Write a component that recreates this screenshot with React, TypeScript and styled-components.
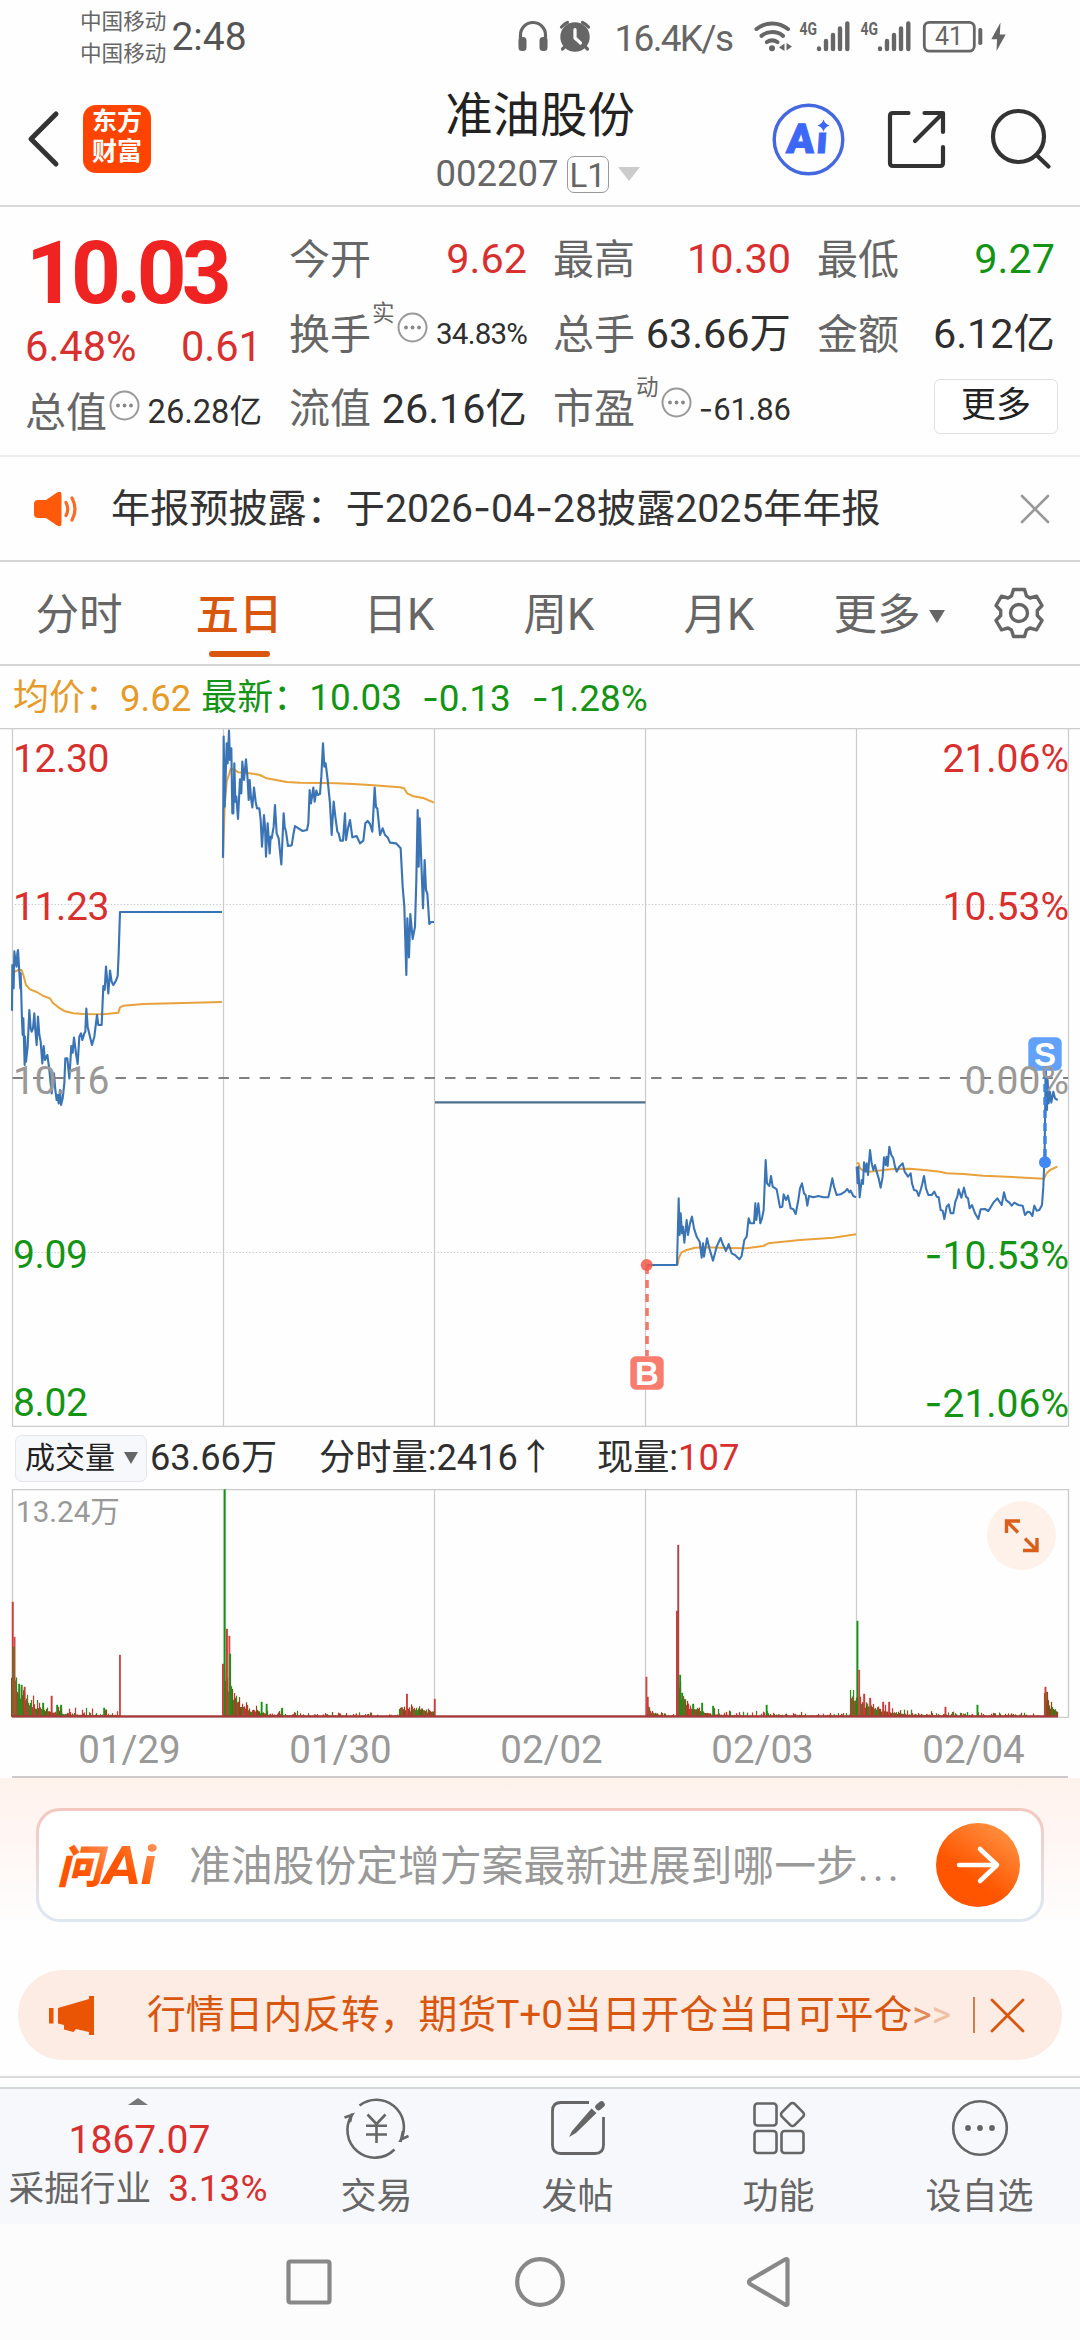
import React from "react";
import styled, { createGlobalStyle } from "styled-components";

const RED = "#d8302f";
const GREEN = "#149414";
const GREY = "#666666";
const INK = "#2f2f2f";
const ORANGE = "#d9560f";
const LINE = "#cccccc";

const GlobalStyle = createGlobalStyle`
  * { box-sizing: border-box; }
  body { margin: 0; background: #fefefe; }
  svg { display: block; flex: none; }
`;

const Page = styled.div`
  width: 1080px;
  height: 2340px;
  overflow: hidden;
  display: flex;
  flex-direction: column;
  background: #fefefe;
  color: ${INK};
  font-family: Roboto, "Noto Sans CJK SC", sans-serif;
  white-space: nowrap;
`;

interface LabelProps {
  $size: number;
  $color?: string;
  $weight?: number;
  $ls?: number;
  $ml?: number;
}
const Label = styled.span<LabelProps>`
  font-size: ${(p) => p.$size}px;
  line-height: 1.2;
  color: ${(p) => p.$color ?? INK};
  font-weight: ${(p) => p.$weight ?? 400};
  letter-spacing: ${(p) => p.$ls ?? 0}px;
  margin-left: ${(p) => p.$ml ?? 0}px;
`;
const Dash = styled.span`
  font-family: Inter, sans-serif;
`;

/* Figures use a wider hyphen than the digit face provides. */
const dashed = (s: string) =>
  s.split("-").map((part, i) => (
    <React.Fragment key={i}>
      {i > 0 && <Dash>-</Dash>}
      {part}
    </React.Fragment>
  ));

/* ---------- status bar ---------- */
const StatusBar = styled.div`
  height: 75px;
  flex: none;
  display: flex;
  justify-content: space-between;
  padding: 0 72px 0 80px;
`;
const StatusSide = styled.div`
  display: flex;
  align-items: center;
`;
const Carriers = styled.div`
  display: flex;
  flex-direction: column;
  font-size: 21.6px;
  line-height: 32px;
  color: ${GREY};
  padding-top: 1px;
`;
const StatusIcons = styled.svg`
  width: 492px;
  height: 75px;
`;

/* ---------- header ---------- */
const Header = styled.header`
  height: 132px;
  flex: none;
  display: grid;
  grid-template-columns: 322px 1fr 322px;
  border-bottom: 2px solid #d9d9d9;
`;
const HeaderLeft = styled.div`
  display: flex;
  align-items: center;
  padding: 0 0 3px 26px;
  gap: 23px;
`;
const AppLogo = styled.div`
  width: 68px;
  height: 68px;
  border-radius: 13px;
  background: #ff4400;
  color: #fff;
  font-size: 25px;
  line-height: 30px;
  font-weight: 700;
  text-align: center;
  padding-top: 2px;
  white-space: normal;
`;
const HeaderTitle = styled.div`
  display: flex;
  flex-direction: column;
  align-items: center;
`;
const StockName = styled.h1`
  margin: 13px 0 0;
  font-size: 47.4px;
  line-height: 56px;
  font-weight: 400;
  color: #222;
`;
const CodeLine = styled.div`
  display: flex;
  align-items: center;
  height: 40px;
  margin-top: 10px;
  padding-right: 5px;
`;
const LevelBadge = styled.span`
  width: 42px;
  height: 37px;
  margin: 0 9px 0 8px;
  border: 1.5px solid #999;
  border-radius: 7px;
  color: ${GREY};
  font-size: 33px;
  line-height: 37px;
  text-align: center;
`;
const Triangle = styled.i<{ $w: number; $h: number; $color: string; $up?: boolean }>`
  border: ${(p) => p.$w / 2}px solid transparent;
  border-top: ${(p) => (p.$up ? "0" : `${p.$h}px solid ${p.$color}`)};
  border-bottom: ${(p) => (p.$up ? `${p.$h}px solid ${p.$color}` : "0")};
`;

/* ---------- quote panel ---------- */
const QuotePanel = styled.section`
  height: 250px;
  flex: none;
  padding: 16px 24px 0 25px;
  display: grid;
  grid-template-columns: 237px 1fr;
  column-gap: 27px;
  border-bottom: 2px solid #ececec;
`;
const PriceColumn = styled.div`
  display: grid;
  grid-template-rows: 93px 61px 71px;
`;
const BigPrice = styled.div`
  font-size: 87px;
  line-height: 100px;
  font-weight: 700;
  letter-spacing: -4.8px;
  color: #f02323;
  padding-left: 1px;
`;
const Cell = styled.div`
  display: flex;
  align-items: center;
  justify-content: space-between;
`;
const StatGrid = styled.div`
  display: grid;
  grid-template-columns: repeat(3, 238px);
  grid-template-rows: repeat(3, 74.6px);
  column-gap: 26px;
`;
const Caption = styled.span`
  font-size: 41px;
  line-height: 48px;
  color: ${GREY};
  display: flex;
  align-items: center;
`;
const Sup = styled.sup`
  font-size: 22.5px;
  line-height: 22px;
  align-self: flex-start;
  margin: -9px 0 0 1px;
`;
const DotsRing = styled.svg`
  width: 31px;
  height: 31px;
  margin: -14px 0 0 2px;
`;
const MoreButton = styled.button`
  width: 124px;
  height: 55px;
  margin: -6px -3px 0 auto;
  padding: 0;
  border: 1.5px solid #e0e0e0;
  border-radius: 6px;
  background: #fff;
  color: #222;
  font: 400 35px/48px Roboto, "Noto Sans CJK SC", sans-serif;
`;

/* ---------- notice ---------- */
const Notice = styled.div`
  height: 105px;
  flex: none;
  display: flex;
  align-items: center;
  padding: 0 30px 0 33px;
  border-bottom: 2px solid #d6d6d6;
`;
const Spacer = styled.div`
  flex: 1;
`;

/* ---------- tabs ---------- */
const Tabs = styled.nav`
  height: 104px;
  flex: none;
  margin-left: -1px;
  display: grid;
  grid-template-columns: repeat(5, 160px) 180px 1fr;
  border-bottom: 2px solid #d6d6d6;
`;
const Tab = styled.div<{ $active?: boolean }>`
  display: flex;
  flex-direction: column;
  align-items: center;
  padding-top: 24px;
  font-size: 43.6px;
  line-height: 60px;
  color: ${(p) => (p.$active ? ORANGE : GREY)};
  font-weight: ${(p) => (p.$active ? 500 : 400)};
`;
const TabInline = styled.span`
  display: flex;
  align-items: center;
  gap: 8px;
`;
const Underline = styled.i`
  width: 61px;
  height: 6px;
  margin-top: 5px;
  border-radius: 3px;
  background: ${ORANGE};
`;
const GearBox = styled.div`
  padding: 24px 0 0 13px;
`;

/* ---------- chart ---------- */
const Legend = styled.div`
  height: 62px;
  flex: none;
  display: flex;
  align-items: center;
  padding: 3px 0 0 13px;
`;
const ChartBox = styled.div`
  height: 699px;
  flex: none;
  position: relative;
`;
const AxisLabel = styled.span<{ $top: number; $right?: boolean; $color: string }>`
  position: absolute;
  top: ${(p) => p.$top + 1}px;
  ${(p) => (p.$right ? "right: 11px;" : "left: 13px; letter-spacing: -0.4px;")}
  font-size: 39px;
  line-height: 46px;
  color: ${(p) => p.$color};
`;
const VolumeBar = styled.div`
  height: 62px;
  flex: none;
  display: flex;
  align-items: center;
  padding: 0 0 0 15px;
`;
const Picker = styled.div`
  width: 132px;
  height: 47px;
  display: flex;
  align-items: center;
  justify-content: space-between;
  padding: 0 8px 0 9px;
  border: 1.5px solid #e4e6ea;
  border-radius: 7px;
  background: #f7f8fb;
`;
const VolumeBox = styled.div`
  height: 229px;
  flex: none;
  position: relative;
`;
const VolumeMax = styled.span`
  position: absolute;
  left: 16px;
  top: 5px;
  font-size: 29.6px;
  line-height: 36px;
  color: #999;
`;
const Expand = styled.div`
  position: absolute;
  left: 987px;
  top: 12px;
  width: 69px;
  height: 69px;
  border-radius: 50%;
  background: #fef1ea;
`;
const Dates = styled.div`
  height: 60px;
  flex: none;
  margin: 0 12px;
  border-bottom: 2px solid #cfcaca;
  display: grid;
  grid-template-columns: repeat(5, 211px);
  padding-left: 12px;
  text-align: center;
  font-size: 38.5px;
  line-height: 63px;
  color: #999;
`;

/* ---------- assistant & promo ---------- */
const AskSection = styled.section`
  height: 192px;
  flex: none;
  padding: 30px 36px 0;
  background: linear-gradient(#fff2ed 0, #fff6f3 60px, #fefefe 150px);
`;
const AskCard = styled.div`
  height: 114px;
  border: 3px solid transparent;
  border-radius: 24px;
  background: linear-gradient(#fff, #fff) padding-box,
    linear-gradient(#f3c8c0, #efd0cc 30%, #dfe6f1 85%) border-box;
  display: flex;
  align-items: center;
  padding: 0 21px 0 8px;
`;
const AskText = styled.span`
  margin-left: 26px;
  padding-top: 4px;
  font-size: 41.8px;
  line-height: 50px;
  color: #999;
`;
const Ellipsis = styled.span`
  letter-spacing: 4px;
`;
const GoButton = styled.div`
  width: 84px;
  height: 84px;
  border-radius: 50%;
  background: linear-gradient(215deg, #ff9444 8%, #ff5500 62%);
`;
const Promo = styled.section`
  height: 90px;
  flex: none;
  margin: 0 18px;
  padding: 0 37px 0 29px;
  border-radius: 45px;
  background: #fcece3;
  display: flex;
  align-items: center;
`;
const PromoDivider = styled.i`
  flex: none;
  width: 2px;
  height: 36px;
  margin-right: 15px;
  background: #cc7d55;
`;
const Seam = styled.div`
  height: 29px;
  flex: none;
  padding-top: 16px;
  border-bottom: 2px solid #d3d8da;
  &::before {
    content: "";
    display: block;
    height: 2px;
    background: #dadada;
  }
`;

/* ---------- bottom bars ---------- */
const BottomBar = styled.footer`
  height: 135px;
  flex: none;
  display: grid;
  grid-template-columns: 276px repeat(4, 201px);
  background: #f7f8fb;
`;
const IndexBox = styled.div`
  display: flex;
  flex-direction: column;
  align-items: center;
  padding-top: 9px;
`;
const IndexValue = styled.span`
  margin: 12px 0 0 3px;
  font-size: 39px;
  line-height: 47px;
  color: ${RED};
`;
const IndexRow = styled.div`
  display: flex;
  align-items: center;
  margin-top: 3px;
  gap: 17px;
`;
const Action = styled.div`
  display: flex;
  flex-direction: column;
  align-items: center;
  padding-top: 5px;
  font-size: 36px;
  line-height: 50px;
  color: ${GREY};
  & > span {
    margin-top: 12px;
  }
`;
const SystemNav = styled.div`
  flex: 1;
  background: #fcfcfc;
`;

/* ---------- series data: [x, y] pairs on a 3x grid ---------- */
const PRICE_A = [
  "36,872 37,735 41,805 43,694 47,730 50,740 52,700 54,690 57,740 61,805 62,760 66,900 68,945 70,895 74,1035 75,950 78,1025 83,980 88,870 92,925 95,935 99,925 103,880 106,930 110,975 114,890 118,945 122,965 127,1030 131,978 135,1020 142,1005 147,1040 155,1120 162,1060 166,1110 170,1140 173,1125 176,1150 180,1110 183,1155 188,1135 193,1090 196,1015 202,1015 208,1075 214,978 218,998 222,953 228,1000 233,1032 238,950 243,940 247,960 253,940 256,935 259,866 263,920 270,950 276,975 283,950 291,885 295,915 305,915 310,798 314,810 318,740 325,820 330,752 335,785 340,795 348,782 353,768 356,700 360,576 666,576",
  "669,413 671,50 674,260 680,70 683,130 687,32 690,120 694,85 697,280 700,280 703,130 706,245 709,230 714,297 720,178 724,220 727,125 732,180 738,118 743,180 746,240 749,180 753,235 757,262 762,203 767,245 771,265 778,265 782,300 786,380 792,285 795,320 798,410 803,310 809,400 812,350 815,355 821,320 825,255 830,340 836,355 844,433 851,280 854,320 858,335 864,378 875,376 880,345 885,318 895,325 908,333 921,330 925,310 929,210 933,250 940,203 944,245 949,212 953,225 960,222 964,170 969,70 973,140 977,130 983,180 990,250 995,345 1001,245 1006,290 1012,335 1016,340 1021,362 1029,362 1035,280 1038,360 1044,325 1050,300 1057,352 1070,348 1080,370 1090,362 1096,310 1103,303 1110,312 1117,335 1124,203 1128,262 1132,265 1140,345 1148,325 1155,345 1163,352 1170,368 1188,370 1202,385 1208,500 1213,560 1219,765 1222,595 1227,712 1231,582 1238,657 1245,620 1249,480 1253,270 1256,440 1259,295 1263,400 1269,565 1274,420 1278,510 1282,520 1288,612 1293,606 1302,606",
];
const MEAN_A = [
  "36,765 45,755 55,750 65,750 70,765 78,795 90,808 110,816 130,828 150,835 158,848 175,862 195,874 220,880 250,882 310,883 355,878 360,862 370,857 430,852 550,849 666,846",
  "669,413 674,260 680,185 688,160 692,146 702,148 715,157 735,158 765,162 780,165 800,175 840,182 860,186 900,188 960,189 1010,190 1060,192 1120,196 1180,200 1200,202 1212,205 1222,220 1240,229 1270,234 1302,248",
];
const PRICE_B = [
  "140,735 231,735 236,535 239,645 242,580 246,640 249,620 253,668 260,600 264,645 270,610 276,590 282,625 290,650 299,665 305,713 309,670 312,710 321,655 328,685 339,722 350,680 362,654 368,672 378,693 386,672 395,700 405,705 418,718 425,708 433,660 440,650 446,595 451,610 462,610 466,550 469,600 475,550 481,610 486,595 491,570 497,420 501,490 508,498 513,468 518,500 530,508 540,562 547,560 551,523 558,540 564,527 572,565 580,568 587,582 595,540 600,505 606,490 612,520 617,525 622,557 627,528 640,532 655,528 670,532 685,532 690,510 697,475 702,500 710,525 722,523 735,515 742,507 748,517 752,512 760,528 768,532",
  "770,440 773,490 775,440 779,532 785,480 789,492 792,427 797,455 800,430 804,465 810,390 815,430 820,450 825,435 830,455 836,475 842,503 848,470 852,412 857,435 860,410 863,438 868,380 874,405 880,415 885,440 890,455 898,440 908,430 914,455 924,470 932,460 936,490 942,510 950,512 956,528 962,510 966,495 972,468 978,505 985,525 995,525 1003,515 1010,530 1016,532 1022,570 1028,572 1033,597 1040,560 1046,553 1052,580 1060,580 1066,545 1072,530 1076,508 1084,533 1092,503 1098,530 1104,535 1109,565 1116,555 1125,580 1135,597 1142,568 1155,567 1165,573 1172,562 1180,548 1192,535 1205,555 1212,517 1218,540 1228,548 1235,557 1243,548 1255,555 1268,557 1275,585 1283,575 1290,577 1297,588 1303,557 1310,572 1318,570 1326,555 1330,500 1334,400 1337,125 1341,270 1343,180 1346,250 1350,215 1354,248 1360,215 1365,235 1373,240",
];
const MEAN_B = [
  "233,735 236,715 244,697 260,690 285,683 320,682 380,684 440,685 490,678 505,670 600,660 700,653 768,643",
  "770,430 776,430 780,445 790,452 810,455 850,450 880,447 930,446 980,451 1020,455 1040,460 1090,462 1150,467 1220,470 1290,474 1332,476 1340,460 1350,450 1372,440",
];

const COLUMNS = [12.5, 223.5, 434.5, 645.5, 856.5, 1068.5];

const Series = ({ points, color, width }: { points: string[]; color: string; width: number }) => (
  <>
    {points.map((p) => (
      <polyline key={p.slice(0, 9)} points={p} fill="none" stroke={color} strokeWidth={width} strokeLinejoin="round" />
    ))}
  </>
);

const PriceChart = () => (
  <svg width="1080" height="699" viewBox="0 728 1080 699">
    <path d="M0 728.5H1080M12.5 1426.5H1068.5" stroke={LINE} strokeWidth="1.4" />
    {COLUMNS.map((x) => (
      <path key={x} d={`M${x} 729V1426.5`} stroke={LINE} strokeWidth="1.2" />
    ))}
    <path d="M15 904.5H1068M15 1252.5H1068" stroke="#c8c8c8" strokeWidth="1.2" strokeDasharray="1.3 2" />
    <g transform="translate(0 720) scale(0.33333)">
      <Series points={MEAN_A} color="#e8a23c" width={6} />
      <Series points={PRICE_A} color="#3a74b5" width={6.4} />
    </g>
    <path d="M435 1102.4H645.5" stroke="#4f6f90" strokeWidth="2.4" />
    <g transform="translate(600 1020) scale(0.33333)">
      <Series points={MEAN_B} color="#e8a23c" width={6} />
      <Series points={PRICE_B} color="#3a74b5" width={6.2} />
    </g>
    <path d="M12.5 1078H1068" stroke="#808080" strokeWidth="2" strokeDasharray="10.4 10.2" />
    <path d="M647 1265V1356" stroke="#f4796a" strokeWidth="3.6" strokeDasharray="8 6" strokeDashoffset="-1" />
    <circle cx="646.7" cy="1265" r="6" fill="#f4584a" fillOpacity="0.85" />
    <rect x="630.3" y="1356.3" width="33.4" height="33.4" rx="5.5" fill="#f87d6e" />
    <text x="647" y="1385" fontSize="33" fontWeight="700" fill="#fff" textAnchor="middle" fontFamily="Liberation Sans, sans-serif">B</text>
    <rect x="1028.3" y="1037.3" width="33.4" height="33.4" rx="5.5" fill="#62a1fa" />
    <text x="1045" y="1066" fontSize="33" fontWeight="700" fill="#fff" textAnchor="middle" fontFamily="Liberation Sans, sans-serif">S</text>
    <path d="M1045 1071V1160" stroke="#3c80e6" strokeWidth="3.4" strokeDasharray="8 5" />
    <circle cx="1045" cy="1162.3" r="6" fill="#4088f5" />
  </svg>
);

/* Volume decays from each opening burst; fixed spikes are listed apart. */
const BURSTS: [number, number, number, number, number][] = [
  // from, to, start height, decay length, floor
  [12, 120, 44, 15, 5],
  [224, 434, 46, 14, 3],
  [399, 434, 10, 60, 2],
  [646, 676, 14, 6, 1.5],
  [678, 856, 34, 11, 3.5],
  [850, 1040, 26, 22, 3],
  [1044, 1058, 26, 8, 2],
];
const SPIKES: [number, number, string][] = [
  [11.8, 39, "#8a4a1c"], [12.6, 115, "#cf3a3a"], [14.4, 80, "#d04848"], [13.6, 70, "#5c7a1c"],
  [19, 33, "#2e8a1c"], [21.5, 32, "#2e8a1c"], [24.5, 30, "#c93636"], [43, 14, "#149414"],
  [51.5, 21, "#c93636"], [57, 12, "#149414"], [61, 12, "#149414"], [104, 9, "#149414"],
  [119.8, 62, "#cf4a4a"], [222.8, 53, "#cf3a3a"], [226.8, 88, "#cf3a3a"],
  [224.6, 227.5, "#149414"], [229.2, 81, "#d04848"], [230, 63, "#149414"], [261.5, 15, "#149414"],
  [266.5, 13, "#149414"], [282, 9, "#149414"], [406.8, 23, "#cf3a3a"], [434.6, 18, "#cf3a3a"],
  [646.3, 40, "#cf4a4a"], [647.6, 20, "#cf3a3a"], [676.8, 106, "#cf3a3a"], [678.1, 172, "#a84444"],
  [680, 42, "#149414"], [682, 24, "#149414"], [693, 13, "#149414"], [702, 14, "#149414"],
  [713, 11, "#149414"], [766.5, 12, "#149414"], [857.3, 96, "#149414"], [859, 47, "#cf4a4a"],
  [864, 23, "#cf3a3a"], [870, 19, "#cf3a3a"], [883, 15, "#cf3a3a"], [889, 15, "#cf3a3a"],
  [945.3, 10, "#cf3a3a"], [977.3, 12, "#149414"], [1045.3, 30, "#cf3a3a"], [1047, 25, "#8a4a1c"],
];
const noise = (n: number) => {
  const v = Math.sin(n * 12.9898) * 43758.5453;
  return v - Math.floor(v);
};
const VolumeChart = () => (
  <svg width="1080" height="229" viewBox="0 1489 1080 229">
    <path d="M12.5 1489.6H1068.5V1717.4H12.5Z" fill="none" stroke={LINE} strokeWidth="1.4" />
    {COLUMNS.slice(1, 5).map((x) => (
      <path key={x} d={`M${x} 1489V1717`} stroke={LINE} strokeWidth="1.2" />
    ))}
    {BURSTS.flatMap(([from, to, h, decay, floor]) =>
      Array.from({ length: Math.floor(to - from) }, (_, i) => {
        const x = from + i + 0.5;
        const a = noise(x);
        const height = (h * Math.exp(-i / decay)) * (0.55 + a * 0.5) + floor * (0.3 + Math.pow(noise(x + 7), 4) * 1.9 * (0.5 + Math.exp(-i / 70)));
        const tone = noise(x + 3);
        const color = tone < 0.4 ? "#c93434" : tone < 0.72 ? "#7c521a" : "#2e8a1c";
        return <rect key={`${from}-${i}`} x={x - 0.6} y={1716.8 - height} width="1.25" height={height} fill={color} />;
      })
    )}
    {SPIKES.map(([x, h, c]) => (
      <rect key={x} x={x - 0.8} y={1716.8 - h} width="1.9" height={h} fill={c} />
    ))}
    <path d="M12 1716.4H1058" stroke="#a83a3a" strokeWidth="2.2" />
  </svg>
);

const Ring = () => (
  <DotsRing viewBox="0 0 31 31">
    <circle cx="15.5" cy="15.5" r="14" fill="none" stroke="#999" strokeWidth="2" />
    <g fill="#888">
      <circle cx="9" cy="15.5" r="1.9" />
      <circle cx="15.5" cy="15.5" r="1.9" />
      <circle cx="22" cy="15.5" r="1.9" />
    </g>
  </DotsRing>
);

const SignalBars = ({ x }: { x: number }) => (
  <path
    d={`M${x} 49V48.5M${x + 7} 49V41M${x + 14} 49V35M${x + 21} 49V28.5M${x + 28.3} 49V23.5`}
    stroke={GREY}
    strokeWidth="4.4"
    strokeLinecap="round"
  />
);

const StatusGlyphs = () => (
  <StatusIcons viewBox="516 0 492 75" fill="none">
    <path d="M520.5 46V35a12.5 12.5 0 0 1 25 0V46" stroke={GREY} strokeWidth="3.2" />
    <rect x="518.5" y="37" width="8" height="14" rx="3.5" fill={GREY} />
    <rect x="539.5" y="37" width="8" height="14" rx="3.5" fill={GREY} />
    <circle cx="575" cy="37" r="14.7" fill={GREY} />
    <path d="M561.5 27a20 20 0 0 1 6-4.5M588.5 27a20 20 0 0 0-6-4.5M565.5 46l-3 3M584.5 46l3 3" stroke={GREY} strokeWidth="3.2" strokeLinecap="round" />
    <path d="M575 29.5V38l5.500 5" stroke="#fff" strokeWidth="3.2" strokeLinecap="round" />
    <text x="614.5" y="51.3" fontSize="37" fill={GREY} fontFamily="Roboto, sans-serif" textLength="119.5">16.4K/s</text>
    <g stroke={GREY} strokeWidth="4" strokeLinecap="round">
      <path d="M756.5 29a25 25 0 0 1 31.5 0" />
      <path d="M761.5 35.8a17.5 17.5 0 0 1 21.5 0" />
      <path d="M766.8 42.2a9.5 9.5 0 0 1 10.7 0" />
    </g>
    <circle cx="772" cy="48.3" r="3" fill={GREY} />
    <path d="M784.5 43.5V51L779 47.5ZM786.5 43V50.5L792 46.5Z" fill={GREY} />
    <text x="799.5" y="34.5" fontSize="18.5" fontWeight="700" fill={GREY} fontFamily="Roboto, sans-serif" textLength="17.5" lengthAdjust="spacingAndGlyphs">4G</text>
    <SignalBars x={819} />
    <text x="860.5" y="34.5" fontSize="18.5" fontWeight="700" fill={GREY} fontFamily="Roboto, sans-serif" textLength="17.5" lengthAdjust="spacingAndGlyphs">4G</text>
    <SignalBars x={880} />
    <rect x="924.3" y="22.3" width="50" height="28.8" rx="5" stroke={GREY} strokeWidth="2.8" />
    <text x="949" y="45.3" fontSize="25" fill={GREY} textAnchor="middle" fontFamily="Roboto, sans-serif">41</text>
    <rect x="978.3" y="28" width="4" height="17" rx="1.8" fill={GREY} />
    <path d="M1000.5 22.5L991.3 39.3H997L996.5 51L1005.7 34.5H999.8Z" fill={GREY} />
  </StatusIcons>
);

const HeaderIcons = () => (
  <svg width="322" height="130" viewBox="758 75 322 130" fill="none">
    <circle cx="808.5" cy="139.5" r="34.3" stroke="#4368e0" strokeWidth="3.4" />
    <text x="786" y="153" fontSize="41" fontWeight="900" fill="#3d68f7" transform="translate(10.5 0) skewX(-4)" fontFamily="Roboto, sans-serif" stroke="#3d68f7" strokeWidth="1">A</text>
    <text x="816" y="153.5" fontSize="38" fontWeight="900" fill="#3d68f7" transform="translate(10.5 0) skewX(-4)" stroke="#3d68f7" strokeWidth="1" fontFamily="Roboto, sans-serif">ı</text>
    <path d="M823.5 119.5Q825 124 829.5 125.5Q825 127 823.5 131.500Q822 127 817.5 125.5Q822 124 823.5 119.5Z" fill="#3d68f7" />
    <g stroke="#333" strokeWidth="4.2" strokeLinecap="round" strokeLinejoin="round">
      <path d="M908.5 113H893Q890 113 890 116V163Q890 166 893 166H940Q943 166 943 163V147" />
      <path d="M924.5 113H943V132M942.5 113.5L915 141" />
      <circle cx="1018.5" cy="136.5" r="25.5" />
      <path d="M1036.5 155L1048.5 166.5" />
    </g>
  </svg>
);

const Cross = ({ size, color, width }: { size: number; color: string; width: number }) => (
  <svg width={size} height={size} viewBox={`0 0 ${size} ${size}`}>
    <path d={`M2 2L${size - 2} ${size - 2}M${size - 2} 2L2 ${size - 2}`} stroke={color} strokeWidth={width} strokeLinecap="round" />
  </svg>
);

const Gear = () => (
  <svg width="54" height="54" viewBox="-27 -27 54 54" fill="none" stroke={GREY} strokeWidth="3.4" strokeLinejoin="round">
    <path d="M-5.5 -23.5H5.5L7.5 -17L11 -15L17.5 -16.8L23 -7.5L18.3 -2.5V2.5L23 7.5L17.5 16.8L11 15L7.5 17L5.5 23.5H-5.5L-7.5 17L-11 15L-17.5 16.8L-23 7.5L-18.3 2.5V-2.5L-23 -7.5L-17.5 -16.8L-11 -15L-7.5 -17Z" />
    <circle r="8.5" />
  </svg>
);

const TradeIcon = () => (
  <svg width="68" height="66" viewBox="342 2094 68 66" fill="none" stroke={GREY} strokeWidth="2.6">
    <path d="M358.500 2105.5A27.500 27.500 0 0 1 400 2139.500L407.500 2136M399.500 2142L402 2131" />
    <path d="M393.5 2149.5A27.500 27.500 0 0 1 351 2115L343.5 2117.5M351 2113.5L349 2122" />
    <path d="M366.5 2114.5L375.5 2124L384.5 2114.5M365 2125.8H386M365 2134.5H386M375.5 2124V2143" />
  </svg>
);
const PostIcon = () => (
  <svg width="68" height="66" viewBox="543 2094 68 66" fill="none" stroke={GREY} strokeWidth="2.8">
    <path d="M588 2102.5H560Q551.5 2102.5 551.5 2111V2145Q551.5 2153.5 560 2153.5H594Q602.5 2153.5 602.5 2145V2117" />
    <path d="M571 2131L590.5 2108.5L595.5 2113L575 2133L568 2137Z" fill={GREY} stroke="none" />
    <path d="M597.5 2107L600.5 2104.5" strokeWidth="6.5" strokeLinecap="round" />
  </svg>
);
const AppsIcon = () => (
  <svg width="68" height="66" viewBox="744 2094 68 66" fill="none" stroke={GREY} strokeWidth="2.6">
    <rect x="753.5" y="2103.5" width="22" height="22" rx="3" />
    <rect x="753.5" y="2131" width="22" height="22" rx="3" />
    <rect x="780.5" y="2131" width="22" height="22" rx="3" />
    <rect x="782.5" y="2105.5" width="18" height="18" rx="3" transform="rotate(45 791.5 2114.5)" />
  </svg>
);
const SelectIcon = () => (
  <svg width="68" height="66" viewBox="-34 -34 68 66" fill="none">
    <circle r="26.8" stroke={GREY} strokeWidth="2.6" />
    <g fill={GREY}>
      <circle cx="-12" r="2.9" />
      <circle r="2.9" />
      <circle cx="12" r="2.9" />
    </g>
  </svg>
);

const LEFT_LABELS: [string, number, string][] = [
  ["12.30", 7, RED], ["11.23", 155, RED], ["10.16", 329, "#999"], ["9.09", 503, GREEN], ["8.02", 651, GREEN],
];
const RIGHT_LABELS: [string, number, string][] = [
  ["21.06%", 7, RED], ["10.53%", 155, RED], ["0.00%", 329, "#999"], ["-10.53%", 503, GREEN], ["-21.06%", 651, GREEN],
];

export default function App() {
  return (
    <Page>
      <GlobalStyle />
      <StatusBar>
        <StatusSide>
          <Carriers>
            <span>中国移动</span>
            <span>中国移动</span>
          </Carriers>
          <Label $size={39} $color="#555" $ml={5}>2:48</Label>
        </StatusSide>
        <StatusGlyphs />
      </StatusBar>

      <Header>
        <HeaderLeft>
          <svg width="34" height="58" viewBox="0 0 34 58">
            <path d="M30 4L5 29L30 54" fill="none" stroke="#333" strokeWidth="5" strokeLinecap="round" strokeLinejoin="round" />
          </svg>
          <AppLogo>东方<br />财富</AppLogo>
        </HeaderLeft>
        <HeaderTitle>
          <StockName>准油股份</StockName>
          <CodeLine>
            <Label $size={36.5} $color={GREY}>002207</Label>
            <LevelBadge>L1</LevelBadge>
            <Triangle $w={22} $h={14} $color="#ccc" />
          </CodeLine>
        </HeaderTitle>
        <HeaderIcons />
      </Header>

      <QuotePanel>
        <PriceColumn>
          <BigPrice>10.03</BigPrice>
          <Cell>
            <Label $size={41.6} $color={RED}>6.48%</Label>
            <Label $size={41.6} $color={RED}>0.61</Label>
          </Cell>
          <Cell>
            <Caption>总值<Ring /></Caption>
            <Label $size={32.6}>26.28亿</Label>
          </Cell>
        </PriceColumn>
        <StatGrid>
          <Cell><Caption>今开</Caption><Label $size={41.4} $color={RED}>9.62</Label></Cell>
          <Cell><Caption>最高</Caption><Label $size={41.4} $color={RED}>10.30</Label></Cell>
          <Cell><Caption>最低</Caption><Label $size={41.4} $color={GREEN}>9.27</Label></Cell>
          <Cell><Caption>换手<Sup>实</Sup><Ring /></Caption><Label $size={29.5} $ls={-0.8}>34.83%</Label></Cell>
          <Cell><Caption>总手</Caption><Label $size={41.4}>63.66万</Label></Cell>
          <Cell><Caption>金额</Caption><Label $size={41.4}>6.12亿</Label></Cell>
          <Cell><Caption>流值</Caption><Label $size={41.4}>26.16亿</Label></Cell>
          <Cell><Caption>市盈<Sup>动</Sup><Ring /></Caption><Label $size={31}>{dashed("-61.86")}</Label></Cell>
          <Cell><MoreButton>更多</MoreButton></Cell>
        </StatGrid>
      </QuotePanel>

      <Notice>
        <svg width="46" height="38" viewBox="0 0 46 38" fill="none">
          <path d="M1 14Q1 10 5 10H13L24 2.500Q28.500 0 28.500 5V33Q28.500 38 24 35.500L13 28H5Q1 28 1 24Z" fill="#ff5a0a" />
          <path d="M33 12.500Q36.500 19 33 25.500" stroke="#ff6a22" strokeWidth="3.200" strokeLinecap="round" />
          <path d="M39 8Q45 19 39 30" stroke="#ff6a22" strokeWidth="3.200" strokeLinecap="round" />
        </svg>
        <Label $size={39.15} $ml={32} $color="#333">{dashed("年报预披露：于2026-04-28披露2025年年报")}</Label>
        <Spacer />
        <Cross size={30} color="#999" width={2.6} />
      </Notice>

      <Tabs>
        <Tab>分时</Tab>
        <Tab $active>五日<Underline /></Tab>
        <Tab>日K</Tab>
        <Tab>周K</Tab>
        <Tab>月K</Tab>
        <Tab>
          <TabInline>更多<Triangle $w={16} $h={13} $color={GREY} /></TabInline>
        </Tab>
        <GearBox><Gear /></GearBox>
      </Tabs>

      <Legend>
        <Label $size={36} $color="#e69a28">均价：</Label>
        <Label $size={36.5} $color="#e69a28" $ml={-1}>9.62</Label>
        <Label $size={36} $color={GREEN} $ml={10}>最新：</Label>
        <Label $size={36.9} $color={GREEN}>10.03</Label>
        <Label $size={36.9} $color={GREEN} $ml={20}>{dashed("-0.13")}</Label>
        <Label $size={36.9} $color={GREEN} $ml={21}>{dashed("-1.28%")}</Label>
      </Legend>

      <ChartBox>
        <PriceChart />
        {LEFT_LABELS.map(([t, y, c]) => (
          <AxisLabel key={t} $top={y} $color={c}>{t}</AxisLabel>
        ))}
        {RIGHT_LABELS.map(([t, y, c]) => (
          <AxisLabel key={t} $top={y} $color={c} $right>{dashed(t)}</AxisLabel>
        ))}
      </ChartBox>

      <VolumeBar>
        <Picker>
          <Label $size={30} $color="#222">成交量</Label>
          <Triangle $w={15} $h={12} $color={GREY} />
        </Picker>
        <Label $size={36.2} $ml={3}>63.66万</Label>
        <Label $size={36.2} $ml={42}>分时量:2416↑</Label>
        <Label $size={36.2} $ml={43}>现量:</Label>
        <Label $size={36.4} $color={RED}>107</Label>
      </VolumeBar>

      <VolumeBox>
        <VolumeChart />
        <VolumeMax>13.24万</VolumeMax>
        <Expand>
          <svg width="69" height="69" viewBox="0 0 69 69" fill="none" stroke="#d9601c" strokeWidth="3.4">
            <path d="M19.500 32V20H33M20 20.500L31 31.500M50 37V49.500H36M49.500 49L38 37.500" />
          </svg>
        </Expand>
      </VolumeBox>

      <Dates>
        <span>01/29</span>
        <span>01/30</span>
        <span>02/02</span>
        <span>02/03</span>
        <span>02/04</span>
      </Dates>

      <AskSection>
        <AskCard>
          <svg width="116" height="80" viewBox="47 1825 116 80">
            <defs>
              <linearGradient id="ask" x1="0" y1="1" x2="1" y2="0">
                <stop offset="0.45" stopColor="#ff5500" />
                <stop offset="1" stopColor="#ffa06a" />
              </linearGradient>
            </defs>
            <g fill="url(#ask)" fontStyle="italic">
              <text x="57" y="1883" fontSize="45" fontWeight="900" fontFamily="Noto Sans CJK SC, sans-serif">问</text>
              <text x="103" y="1884" fontSize="53" fontWeight="700" fontFamily="Roboto, sans-serif" textLength="53" lengthAdjust="spacingAndGlyphs">Ai</text>
            </g>
          </svg>
          <AskText>准油股份定增方案最新进展到哪一步<Ellipsis>...</Ellipsis></AskText>
          <Spacer />
          <GoButton>
            <svg width="84" height="84" viewBox="0 0 84 84" fill="none" stroke="#fff" strokeWidth="4.6" strokeLinecap="round" strokeLinejoin="round">
              <path d="M23 42H60M44 26L61 42L44 58" />
            </svg>
          </GoButton>
        </AskCard>
      </AskSection>

      <Promo>
        <svg width="48" height="42" viewBox="46 1993 48 42" fill="#e95504">
          <path d="M48 2007H52.5V2022.5H48ZM57 2007L88 1998V1995H93V2034H88V2031L75 2028L72.5 2031L63 2028.5V2024L57 2022.5Z" />
        </svg>
        <Label $size={38.8} $color={ORANGE} $ml={52}>行情日内反转，期货T+0当日开仓当日可平仓</Label>
        <Label $size={37} $color="#e08a5c">&gt;</Label>
        <Label $size={37} $color="#f0bfa4">&gt;</Label>
        <Spacer />
        <PromoDivider />
        <Cross size={35} color={ORANGE} width={2.8} />
      </Promo>
      <Seam />

      <BottomBar>
        <IndexBox>
          <Triangle $w={21} $h={7} $color="#777" $up />
          <IndexValue>1867.07</IndexValue>
          <IndexRow>
            <Label $size={35.7} $color={GREY}>采掘行业</Label>
            <Label $size={37} $color={RED}>3.13%</Label>
          </IndexRow>
        </IndexBox>
        <Action><TradeIcon /><span>交易</span></Action>
        <Action><PostIcon /><span>发帖</span></Action>
        <Action><AppsIcon /><span>功能</span></Action>
        <Action><SelectIcon /><span>设自选</span></Action>
      </BottomBar>

      <SystemNav>
        <svg width="1080" height="116" viewBox="0 2224 1080 116" fill="none" stroke="#888" strokeWidth="4.2" strokeLinejoin="round">
          <rect x="288.5" y="2261.5" width="41" height="41" rx="2" />
          <circle cx="540" cy="2282" r="22.8" />
          <path d="M787.5 2260V2304Q787 2305.5 785 2304.5L750 2284Q748 2282 750 2280L785 2259.5Q787 2258.5 787.5 2260Z" />
        </svg>
      </SystemNav>
    </Page>
  );
}
